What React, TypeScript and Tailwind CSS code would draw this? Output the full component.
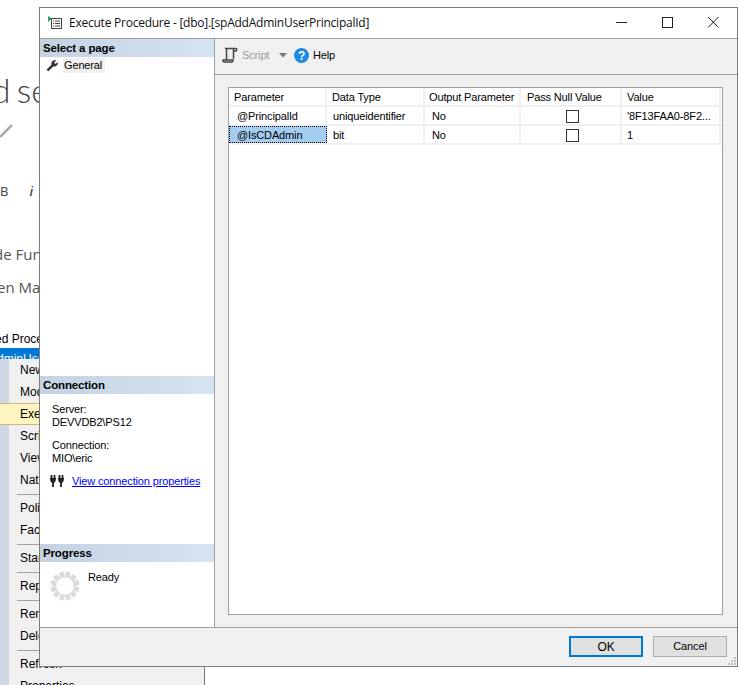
import React from "react";

const menuItems: (string | null)[] = ["New", "Mod", "Exec", "Scri", "View", "Nat", null, "Poli", "Fac", null, "Star", null, "Rep", null, "Ren", "Dele", null];

function Header({ children }: { children: React.ReactNode }) {
  return (
    <div className="h-[18px] shrink-0 pl-[3px] pt-[1px] flex items-center bg-gradient-to-r from-[#c4d2e1] to-[#d6e4f2] text-[11.5px] font-bold text-black leading-none">
      {children}
    </div>
  );
}

function Spinner() {
  const dots = Array.from({ length: 12 }, (_, i) => i);
  return (
    <svg width="30" height="30" viewBox="0 0 30 30" className="shrink-0">
      {dots.map((i) => (
        <rect key={i} x="12.5" y="0.5" width="5" height="6" rx="1" fill="#dcdcdc" transform={`rotate(${i * 30 + 15} 15 15)`} />
      ))}
    </svg>
  );
}

function Cell({ w, className = "", children }: { w: string; className?: string; children?: React.ReactNode }) {
  return <div className={`${w} h-full shrink-0 pt-[1px] border-r-2 border-[#f0f0f0] flex items-center whitespace-nowrap overflow-hidden ${className}`}>{children}</div>;
}

function Check() {
  return <div className="w-[13px] h-[13px] ml-[3px] border border-[#333] bg-white" />;
}

export default function App() {
  return (
    <div className="relative w-[739px] h-[685px] overflow-hidden bg-white font-['Liberation_Sans',sans-serif] text-[11px] text-black">
      {/* Background window */}
      <div className="w-[205px] h-[685px] flex flex-col overflow-hidden">
        <div className="h-[72px] shrink-0" />
        <div className="h-[36px] shrink-0 -ml-[26px] whitespace-nowrap font-['Lato',sans-serif] font-light text-[34px] leading-[36px] text-[#444] [word-spacing:-3px]">ed se</div>
        <div className="h-[46px] shrink-0 flex items-center">
          <svg width="14" height="14" viewBox="0 0 14 14"><path d="M0 13 L12 1" stroke="#aaa" strokeWidth="2.5" /></svg>
        </div>
        <div className="h-[76px] shrink-0 flex items-center gap-[21px] font-['Open_Sans',sans-serif] text-[13px] text-[#444]">
          <span>B</span>
          <span className="italic font-semibold">i</span>
        </div>
        <div className="h-[8px] shrink-0" />
        <div className="h-[33px] shrink-0 -ml-[6px] whitespace-nowrap font-['Open_Sans',sans-serif] text-[15px] text-[#555] flex items-center">de Fun</div>
        <div className="h-[33px] shrink-0 -ml-[3px] whitespace-nowrap font-['Open_Sans',sans-serif] text-[15px] text-[#555] flex items-center">en Ma</div>
        <div className="h-[26px] shrink-0" />
        <div className="h-[18px] shrink-0 -ml-[5px] whitespace-nowrap flex items-center text-[12px]">ed Procedures</div>
        <div className="h-[11px] shrink-0 bg-[#0078d7] text-white text-[12px] overflow-hidden whitespace-nowrap leading-[14px] pt-[4px] -indent-[3px]">dminUser</div>
        <div className="flex flex-1 min-h-0 bg-[#f0f0f0] border-r border-[#7a7a7a] text-[12px]">
          <div className="w-[9px] shrink-0 bg-[#cfd6e5]" />
          <div className="flex-1 flex flex-col">
            {menuItems.map((m, i) =>
              m === null ? (
                <div key={i} className="h-[6px] ml-[8px] shrink-0 flex items-center"><div className="w-full h-[1px] bg-[#a0a0a0]" /></div>
              ) : m === "Exec" ? (
                <div key={i} className="h-[22px] -ml-[9px] shrink-0 bg-[#fdf4bf] border-y border-[#c9b97a] pl-[20px] flex items-center">{m}</div>
              ) : (
                <div key={i} className="h-[22px] shrink-0 pl-[11px] flex items-center">{m}</div>
              )
            )}
            <div className="h-[22px] shrink-0 pl-[11px] flex items-center">Refresh</div>
            <div className="h-[22px] shrink-0 pl-[11px] flex items-center">Properties</div>
          </div>
        </div>
      </div>

      {/* Dialog */}
      <div className="absolute left-[39px] top-[7px] w-[699px] h-[660px] border-[1.5px] border-[#7d7d7d] bg-white flex flex-col tracking-[-0.14px]">
        {/* Title bar */}
        <div className="h-[31px] shrink-0 bg-white border-b border-[#a0a0a0] flex items-center pl-[8px] font-['Open_Sans',sans-serif] text-[12px]">
          <svg width="15" height="14" viewBox="0 0 15 14" className="mr-[6px] shrink-0">
            <path d="M0 0 L4 2.5 L0 6 Z" fill="#2e9e5b" />
            <rect x="3.5" y="2.5" width="10" height="10" fill="none" stroke="#444" />
            <path d="M5 5h1M7 5h5M5 7.5h1M7 7.5h5M5 10h1M7 10h5" stroke="#444" />
          </svg>
          <span className="whitespace-nowrap text-[#111] tracking-[-0.02em]">Execute Procedure - [dbo].[spAddAdminUserPrincipalId]</span>
          <div className="ml-auto flex items-center text-[#222]">
            <svg width="46" height="30" viewBox="0 0 46 30"><path d="M17 14.5h11" stroke="#222" /></svg>
            <svg width="46" height="30" viewBox="0 0 46 30"><rect x="17.5" y="9.5" width="10" height="10" fill="none" stroke="#222" /></svg>
            <svg width="46" height="30" viewBox="0 0 46 30"><path d="M17 9l10.5 10.5M27.5 9l-10.5 10.5" stroke="#222" /></svg>
          </div>
        </div>

        <div className="flex-1 min-h-0 flex">
          {/* Left pane */}
          <div className="w-[175px] shrink-0 bg-white border-r border-[#a0a0a0] flex flex-col">
            <Header>Select a page</Header>
            <div className="h-[17px] flex items-center pl-[6px]">
              <svg width="13" height="13" viewBox="0 0 14 13" className="shrink-0 mr-[4px]">
                <path d="M0.5 11 L6 5.5 C5 2.5 8 0 11 1 L8.8 3.3 L10 4.8 L12.7 3 C13.3 6 10.5 8.3 7.8 7.5 L2.5 12.7 Z" fill="#333" />
              </svg>
              <span className="bg-[#f0f0f0] pl-[1px] pr-[3px] h-[15px] flex items-center">General</span>
            </div>
            <div className="flex-1" />
            <Header>Connection</Header>
            <div className="h-[150px] shrink-0 pl-[12px] pt-[9px] leading-[13px]">
              <div>Server:</div>
              <div>DEVVDB2\PS12</div>
              <div className="mt-[10px]">Connection:</div>
              <div>MIO\eric</div>
              <div className="mt-[9px] flex items-center -ml-[2px]">
                <svg width="15" height="14" viewBox="0 0 15 14" className="mr-[7px] shrink-0">
                  <path d="M1.5 1v4M4.5 1v4M3 8v5M9.5 1v4M12.5 1v4M11 8v5" stroke="#222" strokeWidth="1.8" />
                  <path d="M0 4h6c0 3-1 5-3 5S0 7 0 4ZM8 4h6c0 3-1 5-3 5S8 7 8 4Z" fill="#222" />
                </svg>
                <span className="text-[#0000ff] underline whitespace-nowrap">View connection properties</span>
              </div>
            </div>
            <Header>Progress</Header>
            <div className="h-[65px] shrink-0 flex items-start pl-[10px] pt-[9px]">
              <Spinner />
              <span className="ml-[8px] -mt-[2px]">Ready</span>
            </div>
          </div>

          {/* Right pane */}
          <div className="flex-1 min-w-0 bg-[#f0f0f0] flex flex-col">
            <div className="h-[36px] shrink-0 border-b border-[#a0a0a0] flex items-center pl-[7px] pb-[3px]">
              <svg width="16" height="16" viewBox="0 0 16 16" className="mr-[4px]">
                <path d="M3 1.5h11c1 0 1 2 0 2.5h-2M4.5 2v10.5M11.5 2v10M1 13h10c0 1.5-.5 2-1.5 2H2.5C1.5 15 1 14 1 13Z" stroke="#444" strokeWidth="1.5" fill="none" />
              </svg>
              <span className="text-[#9a9a9a] w-[28px]">Script</span>
              <svg width="8" height="5" viewBox="0 0 8 5" className="ml-[9px]"><path d="M0 0h8L4 4.5Z" fill="#777" /></svg>
              <svg width="15" height="15" viewBox="0 0 15 15" className="ml-[7px] mr-[4px]">
                <circle cx="7.5" cy="7.5" r="7.5" fill="#1b8ce3" />
                <text x="7.5" y="12" textAnchor="middle" fontSize="12" fontWeight="bold" fill="#fff" fontFamily="Liberation Sans">?</text>
              </svg>
              <span>Help</span>
            </div>

            <div className="flex-1 min-h-0 pl-[13px] pr-[14px] pt-[12px] pb-[12px]">
              <div className="w-full h-full bg-white border-[1.5px] border-[#a0a0a0]">
                <div className="flex h-[19px] border-b-2 border-[#f0f0f0] pl-[5px]">
                  <Cell w="w-[93px]">Parameter</Cell>
                  <Cell w="w-[98px] pl-[5px]">Data Type</Cell>
                  <Cell w="w-[96px] pl-[4px]">Output Parameter</Cell>
                  <Cell w="w-[101px] pl-[6px]">Pass Null Value</Cell>
                  <Cell w="w-[99px] pl-[5px]" className="border-r-0">Value</Cell>
                </div>
                <div className="flex h-[19px] border-b-2 border-[#f0f0f0]">
                  <Cell w="w-[98px] pl-[8px]">@PrincipalId</Cell>
                  <Cell w="w-[98px] pl-[6px]">uniqueidentifier</Cell>
                  <Cell w="w-[96px] pl-[7px]">No</Cell>
                  <Cell w="w-[101px] justify-center"><Check /></Cell>
                  <Cell w="w-[99px] pl-[5px]" className="border-r-0">'8F13FAA0-8F2...</Cell>
                </div>
                <div className="flex h-[19px] border-b-2 border-[#f0f0f0]">
                  <div className="w-[98px] h-full shrink-0 pt-[1px] bg-[#a5cdf0] border border-dotted border-black pl-[7px] flex items-center whitespace-nowrap">@IsCDAdmin</div>
                  <Cell w="w-[98px] pl-[6px]">bit</Cell>
                  <Cell w="w-[96px] pl-[7px]">No</Cell>
                  <Cell w="w-[101px] justify-center"><Check /></Cell>
                  <Cell w="w-[99px] pl-[5px]" className="border-r-0">1</Cell>
                </div>
              </div>
            </div>
          </div>
        </div>

        {/* Footer */}
        <div className="relative h-[39px] shrink-0 bg-[#f0f0f0] border-t border-[#a0a0a0] flex items-start justify-end pt-[8px] pr-[10px] gap-[10px]">
          <div className="w-[74px] h-[21px] bg-[#e1e1e1] border-2 border-[#0078d7] flex items-center justify-center text-[12px]">OK</div>
          <div className="w-[74px] h-[21px] bg-[#e1e1e1] border border-[#adadad] flex items-center justify-center">Cancel</div>
          <svg width="9" height="9" viewBox="0 0 9 9" className="absolute right-0 bottom-0">
            <path d="M6 0h2v2H6zM3 3h2v2H3zM6 3h2v2H6zM0 6h2v2H0zM3 6h2v2H3zM6 6h2v2H6z" fill="#c0c0c0" />
          </svg>
        </div>
      </div>
    </div>
  );
}
